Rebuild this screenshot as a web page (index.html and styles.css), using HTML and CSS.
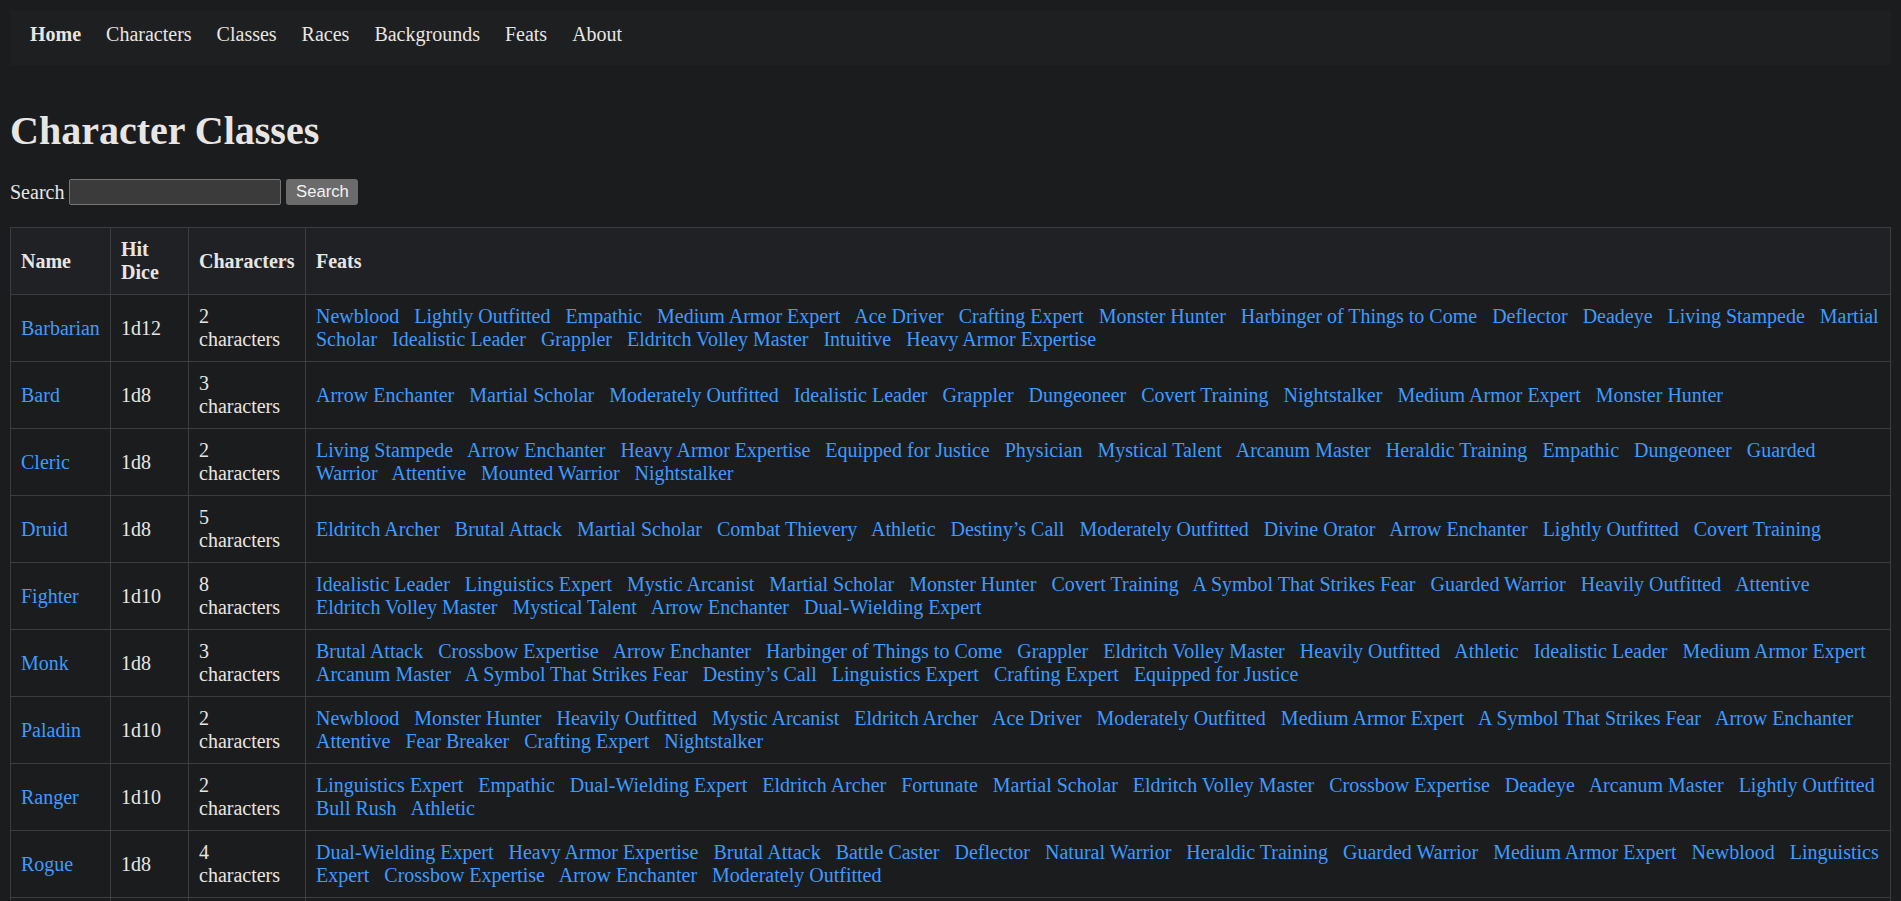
FILE: index.html
```html
<!DOCTYPE html>
<html lang="en">
<head>
<meta charset="utf-8">
<title>Character Classes</title>
<link rel="stylesheet" href="styles.css">
</head>
<body>
<nav class="topnav">
  <a class="nav-link active" href="#">Home</a>
  <a class="nav-link" href="#">Characters</a>
  <a class="nav-link" href="#">Classes</a>
  <a class="nav-link" href="#">Races</a>
  <a class="nav-link" href="#">Backgrounds</a>
  <a class="nav-link" href="#">Feats</a>
  <a class="nav-link" href="#">About</a>
</nav>
<main>
  <h1 class="page-title">Character Classes</h1>
  <form class="search-form">
    <label for="q">Search</label>
    <input id="q" class="search-input" type="text">
    <button class="search-btn" type="button">Search</button>
  </form>
  <table class="class-table">
    <thead>
      <tr>
        <th class="col-name">Name</th>
        <th class="col-dice">Hit Dice</th>
        <th class="col-chars">Characters</th>
        <th>Feats</th>
      </tr>
    </thead>
    <tbody>
      <tr>
        <td><a href="#">Barbarian</a></td>
        <td>1d12</td>
        <td>2 characters</td>
        <td class="feats"><a href="#">Newblood</a>   <a href="#">Lightly Outfitted</a>   <a href="#">Empathic</a>   <a href="#">Medium Armor Expert</a>   <a href="#">Ace Driver</a>   <a href="#">Crafting Expert</a>   <a href="#">Monster Hunter</a>   <a href="#">Harbinger of Things to Come</a>   <a href="#">Deflector</a>   <a href="#">Deadeye</a>   <a href="#">Living Stampede</a>   <a href="#">Martial Scholar</a>   <a href="#">Idealistic Leader</a>   <a href="#">Grappler</a>   <a href="#">Eldritch Volley Master</a>   <a href="#">Intuitive</a>   <a href="#">Heavy Armor Expertise</a></td>
      </tr>
      <tr>
        <td><a href="#">Bard</a></td>
        <td>1d8</td>
        <td>3 characters</td>
        <td class="feats"><a href="#">Arrow Enchanter</a>   <a href="#">Martial Scholar</a>   <a href="#">Moderately Outfitted</a>   <a href="#">Idealistic Leader</a>   <a href="#">Grappler</a>   <a href="#">Dungeoneer</a>   <a href="#">Covert Training</a>   <a href="#">Nightstalker</a>   <a href="#">Medium Armor Expert</a>   <a href="#">Monster Hunter</a></td>
      </tr>
      <tr>
        <td><a href="#">Cleric</a></td>
        <td>1d8</td>
        <td>2 characters</td>
        <td class="feats"><a href="#">Living Stampede</a>   <a href="#">Arrow Enchanter</a>   <a href="#">Heavy Armor Expertise</a>   <a href="#">Equipped for Justice</a>   <a href="#">Physician</a>   <a href="#">Mystical Talent</a>   <a href="#">Arcanum Master</a>   <a href="#">Heraldic Training</a>   <a href="#">Empathic</a>   <a href="#">Dungeoneer</a>   <a href="#">Guarded Warrior</a>   <a href="#">Attentive</a>   <a href="#">Mounted Warrior</a>   <a href="#">Nightstalker</a></td>
      </tr>
      <tr>
        <td><a href="#">Druid</a></td>
        <td>1d8</td>
        <td>5 characters</td>
        <td class="feats"><a href="#">Eldritch Archer</a>   <a href="#">Brutal Attack</a>   <a href="#">Martial Scholar</a>   <a href="#">Combat Thievery</a>   <a href="#">Athletic</a>   <a href="#">Destiny’s Call</a>   <a href="#">Moderately Outfitted</a>   <a href="#">Divine Orator</a>   <a href="#">Arrow Enchanter</a>   <a href="#">Lightly Outfitted</a>   <a href="#">Covert Training</a></td>
      </tr>
      <tr>
        <td><a href="#">Fighter</a></td>
        <td>1d10</td>
        <td>8 characters</td>
        <td class="feats"><a href="#">Idealistic Leader</a>   <a href="#">Linguistics Expert</a>   <a href="#">Mystic Arcanist</a>   <a href="#">Martial Scholar</a>   <a href="#">Monster Hunter</a>   <a href="#">Covert Training</a>   <a href="#">A Symbol That Strikes Fear</a>   <a href="#">Guarded Warrior</a>   <a href="#">Heavily Outfitted</a>   <a href="#">Attentive</a>   <a href="#">Eldritch Volley Master</a>   <a href="#">Mystical Talent</a>   <a href="#">Arrow Enchanter</a>   <a href="#">Dual-Wielding Expert</a></td>
      </tr>
      <tr>
        <td><a href="#">Monk</a></td>
        <td>1d8</td>
        <td>3 characters</td>
        <td class="feats"><a href="#">Brutal Attack</a>   <a href="#">Crossbow Expertise</a>   <a href="#">Arrow Enchanter</a>   <a href="#">Harbinger of Things to Come</a>   <a href="#">Grappler</a>   <a href="#">Eldritch Volley Master</a>   <a href="#">Heavily Outfitted</a>   <a href="#">Athletic</a>   <a href="#">Idealistic Leader</a>   <a href="#">Medium Armor Expert</a>   <a href="#">Arcanum Master</a>   <a href="#">A Symbol That Strikes Fear</a>   <a href="#">Destiny’s Call</a>   <a href="#">Linguistics Expert</a>   <a href="#">Crafting Expert</a>   <a href="#">Equipped for Justice</a></td>
      </tr>
      <tr>
        <td><a href="#">Paladin</a></td>
        <td>1d10</td>
        <td>2 characters</td>
        <td class="feats"><a href="#">Newblood</a>   <a href="#">Monster Hunter</a>   <a href="#">Heavily Outfitted</a>   <a href="#">Mystic Arcanist</a>   <a href="#">Eldritch Archer</a>   <a href="#">Ace Driver</a>   <a href="#">Moderately Outfitted</a>   <a href="#">Medium Armor Expert</a>   <a href="#">A Symbol That Strikes Fear</a>   <a href="#">Arrow Enchanter</a>   <a href="#">Attentive</a>   <a href="#">Fear Breaker</a>   <a href="#">Crafting Expert</a>   <a href="#">Nightstalker</a></td>
      </tr>
      <tr>
        <td><a href="#">Ranger</a></td>
        <td>1d10</td>
        <td>2 characters</td>
        <td class="feats"><a href="#">Linguistics Expert</a>   <a href="#">Empathic</a>   <a href="#">Dual-Wielding Expert</a>   <a href="#">Eldritch Archer</a>   <a href="#">Fortunate</a>   <a href="#">Martial Scholar</a>   <a href="#">Eldritch Volley Master</a>   <a href="#">Crossbow Expertise</a>   <a href="#">Deadeye</a>   <a href="#">Arcanum Master</a>   <a href="#">Lightly Outfitted</a>   <a href="#">Bull Rush</a>   <a href="#">Athletic</a></td>
      </tr>
      <tr>
        <td><a href="#">Rogue</a></td>
        <td>1d8</td>
        <td>4 characters</td>
        <td class="feats"><a href="#">Dual-Wielding Expert</a>   <a href="#">Heavy Armor Expertise</a>   <a href="#">Brutal Attack</a>   <a href="#">Battle Caster</a>   <a href="#">Deflector</a>   <a href="#">Natural Warrior</a>   <a href="#">Heraldic Training</a>   <a href="#">Guarded Warrior</a>   <a href="#">Medium Armor Expert</a>   <a href="#">Newblood</a>   <a href="#">Linguistics Expert</a>   <a href="#">Crossbow Expertise</a>   <a href="#">Arrow Enchanter</a>   <a href="#">Moderately Outfitted</a></td>
      </tr>
      <tr>
        <td><a href="#">Sorcerer</a></td>
        <td>1d6</td>
        <td>3 characters</td>
        <td class="feats"><a href="#">Mystical Talent</a>   <a href="#">Arcanum Master</a>   <a href="#">Empathic</a>   <a href="#">Fortunate</a>   <a href="#">Divine Orator</a></td>
      </tr>
      <tr>
        <td><a href="#">Warlock</a></td>
        <td>1d8</td>
        <td>2 characters</td>
        <td class="feats"><a href="#">Eldritch Archer</a>   <a href="#">Mystic Arcanist</a>   <a href="#">Nightstalker</a>   <a href="#">Deadeye</a></td>
      </tr>
      <tr>
        <td><a href="#">Wizard</a></td>
        <td>1d6</td>
        <td>4 characters</td>
        <td class="feats"><a href="#">Arcanum Master</a>   <a href="#">Linguistics Expert</a>   <a href="#">Battle Caster</a>   <a href="#">Physician</a></td>
      </tr>
    </tbody>
  </table>
</main>
</body>
</html>
```

FILE: styles.css
```css
html {
  background: #1b1c1e;
}

body {
  margin: 10px;
  font-family: "Liberation Serif", "Times New Roman", serif;
  font-size: 20px;
  line-height: normal;
  color: #e8e6e3;
  background: #1b1c1e;
}

a {
  color: #3d9bff;
  text-decoration: none;
}

.topnav {
  display: flex;
  gap: 25px;
  padding: 13px 20px 19px;
  background: #1e1f21;
  line-height: 23px;
}

.nav-link {
  color: #e8e6e3;
}

.nav-link.active {
  font-weight: bold;
}

.page-title {
  font-size: 40px;
  line-height: 46px;
  margin: 43px 0 25px;
}

.search-form {
  display: flex;
  align-items: center;
  gap: 5px;
  margin: 0 0 22px;
  height: 26px;
}

.search-input {
  box-sizing: border-box;
  width: 212px;
  height: 26px;
  margin: 0;
  padding: 1px 3px;
  background: #3b3b3b;
  border: 1px solid #767676;
  border-radius: 2px;
  color: #e8e6e3;
  font-family: "Liberation Sans", Arial, sans-serif;
  font-size: 16.67px;
}

.search-btn {
  box-sizing: border-box;
  width: 72px;
  height: 26px;
  margin: 0;
  padding: 0 8px;
  background: #6b6b6b;
  border: none;
  border-radius: 3px;
  color: #f2f2f2;
  font-family: "Liberation Sans", Arial, sans-serif;
  font-size: 16.67px;
}

.class-table {
  width: 100%;
  border-collapse: collapse;
}

.class-table th,
.class-table td {
  border: 1px solid #3c3d40;
  padding: 10px;
  text-align: left;
  vertical-align: middle;
  line-height: 23px;
}

.class-table th {
  background: #202124;
  font-weight: bold;
}

.col-name {
  width: 79px;
}

.col-dice {
  width: 57px;
}

.col-chars {
  width: 96px;
}

.feats {
  white-space: pre-wrap;
}
```
